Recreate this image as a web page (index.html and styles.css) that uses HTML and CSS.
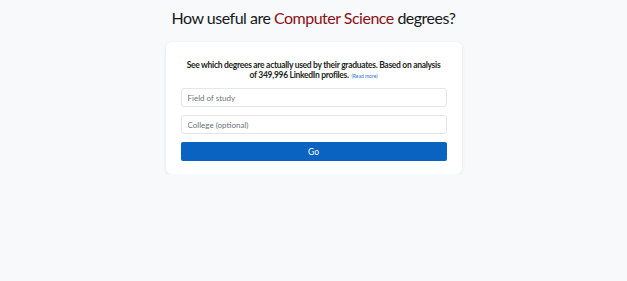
FILE: index.html
```html
<!DOCTYPE html>
<html lang="en">
<head>
<meta charset="utf-8">
<title>How useful are Computer Science degrees?</title>
<link rel="stylesheet" href="styles.css">
</head>
<body>
<main class="page">
  <h1 class="title">How useful are <span class="accent">Computer Science</span> degrees?</h1>
  <section class="card">
    <p class="intro"><span class="line">See which degrees are actually used by their graduates. Based on analysis</span><span class="line">of 349,996 LinkedIn profiles. <a class="more" href="#">(Read more)</a></span></p>
    <form class="form">
      <input class="field" type="text" placeholder="Field of study">
      <input class="field" type="text" placeholder="College (optional)">
      <button class="go" type="button">Go</button>
    </form>
  </section>
</main>
</body>
</html>
```
FILE: styles.css
```css
html, body {
  margin: 0;
  padding: 0;
  background: #f8f9fb;
}
body {
  font-family: Lato, "Open Sans", sans-serif;
  color: #212529;
}
.page {
  display: flex;
  flex-direction: column;
  align-items: center;
  padding-top: 6px;
}
.title {
  margin: 0;
  font-size: 16px;
  font-weight: 400;
  letter-spacing: -0.5px;
  line-height: 24px;
  color: #16181b;
}
.accent {
  color: #8b1014;
}
.card {
  margin-top: 12px;
  width: 296px;
  box-sizing: border-box;
  background: #fff;
  border-radius: 6px;
  box-shadow: 0 1px 4px rgba(0,0,0,0.08);
  padding: 19px 15px 13px;
}
.intro {
  margin: 0;
  font-size: 8.5px;
  font-weight: 700;
  letter-spacing: -0.3px;
  line-height: 9.5px;
  text-align: center;
  color: #1d1f22;
}
.line {
  display: block;
  white-space: nowrap;
}
.more {
  margin-left: 1px;
  font-size: 5px;
  font-weight: 400;
  letter-spacing: 0;
  color: #2f6fd6;
  text-decoration: none;
}
.form {
  margin-top: 7px;
  display: flex;
  flex-direction: column;
  gap: 8px;
}
.field {
  height: 19px;
  box-sizing: border-box;
  margin: 0;
  padding: 0 6px;
  border: 1px solid #e3e6ea;
  border-radius: 3px;
  font-family: inherit;
  font-size: 8px;
  color: #212529;
  background: #fff;
}
.field::placeholder {
  color: #6d737a;
}
.go {
  height: 19px;
  margin: 0;
  border: 0;
  border-radius: 2px;
  background: #0b63c1;
  color: #fff;
  font-family: inherit;
  font-size: 8.5px;
}
```
